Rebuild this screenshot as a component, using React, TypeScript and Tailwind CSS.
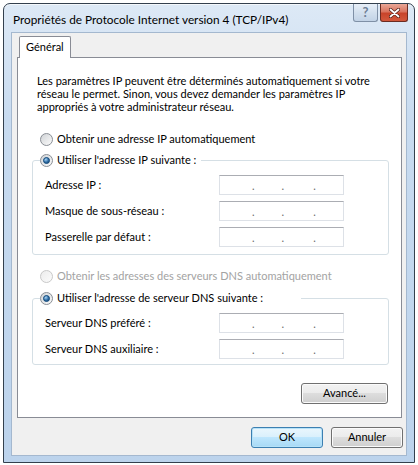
import React from 'react';

const font = { fontFamily: "'Segoe UI', Lato, 'Liberation Sans', sans-serif" };

function Radio({ checked = false, disabled = false }: { checked?: boolean; disabled?: boolean }) {
  return (
    <span
      className={
        'relative flex h-[13px] w-[13px] shrink-0 items-center justify-center rounded-full border ' +
        (disabled
          ? 'border-[#c9c9c9] bg-[#f3f3f3] bg-[linear-gradient(135deg,#ececec,#fbfbfb)]'
          : 'border-[#8a8f96] bg-[#e6e7e9] bg-[linear-gradient(135deg,#d0d3d6,#fbfbfb)]')
      }
    >
      {checked && (
        <span className="h-[7px] w-[7px] rounded-full border border-[#1b4f7e] bg-[#2f6ea6] bg-[radial-gradient(circle_at_35%_30%,#a8d4f5,#2f6ea6_55%,#123f69)]" />
      )}
    </span>
  );
}

function IpBox() {
  return (
    <div className="flex h-[20px] w-[125px] items-center border border-[#dde1e7] border-t-[#abadb3] bg-white text-[11px] leading-none text-[#6b6b6b]">
      <span className="ml-[32px]">.</span>
      <span className="ml-[27px]">.</span>
      <span className="ml-[29px]">.</span>
    </div>
  );
}

function FieldRow({ label }: { label: string }) {
  return (
    <div className="flex h-[20px] items-center">
      <span className="w-[186px] pl-[12px]">{label}</span>
      <IpBox />
    </div>
  );
}

function VistaButton({ label, primary = false, w }: { label: string; primary?: boolean; w: string }) {
  return (
    <button
      className={
        'h-[21px] rounded-[3px] border text-[11px] text-black ' +
        w +
        (primary
          ? ' border-[#3c7fb1] bg-[#d3ecfa] bg-[linear-gradient(to_bottom,#eaf6fd_0%,#d9f0fc_50%,#bee6fd_50%,#a7d9f5_100%)] shadow-[inset_0_0_0_1px_#b6e2f8]'
          : ' border-[#707070] bg-[#e3e3e3] bg-[linear-gradient(to_bottom,#f2f2f2_0%,#ebebeb_50%,#dddddd_50%,#cfcfcf_100%)] shadow-[inset_0_0_0_1px_#fbfbfb]')
      }
      style={font}
    >
      {label}
    </button>
  );
}

export default function App() {
  return (
    <div className="h-[465px] w-[418px] bg-white pl-[3px] pt-[3px]" style={font}>
      <div className="flex h-[460px] w-[412px] flex-col rounded-t-[7px] border border-[#33404e] bg-[#c4d9ef] bg-[linear-gradient(to_bottom,#dde9f6,#c8dbf0_25%,#bcd3ec)] shadow-[inset_0_1px_0_#f4f8fc]">
        {/* title bar */}
        <div className="flex h-[28px] shrink-0 items-start justify-between">
          <span className="mt-[7px] pl-[9px] text-[11.8px] text-black">
            Propriétés de Protocole Internet version 4 (TCP/IPv4)
          </span>
          <div className="mr-[6px] flex gap-[2px]">
            <div className="flex h-[18px] w-[25px] items-center justify-center rounded-b-[3px] border border-t-0 border-[#7f90a6] bg-[#d0deec] bg-[linear-gradient(to_bottom,#e8eff8,#d3e0ee_50%,#c2d3e6)] text-[13px] font-bold leading-none text-[#6d7f96]">
              ?
            </div>
            <div className="flex h-[18px] w-[28px] items-center justify-center rounded-b-[3px] border border-t-0 border-[#6b2c22] bg-[#cf553c] bg-[linear-gradient(to_bottom,#e9a797,#d9745f_45%,#c8442b_55%,#d2583c)]">
              <svg width="11" height="10" viewBox="0 0 11 10">
                <path d="M1.5 1.5 L9.5 8.5 M9.5 1.5 L1.5 8.5" stroke="#4a1a12" strokeWidth="3.2" strokeLinecap="round" />
                <path d="M1.5 1.5 L9.5 8.5 M9.5 1.5 L1.5 8.5" stroke="#ffffff" strokeWidth="1.8" strokeLinecap="round" />
              </svg>
            </div>
          </div>
        </div>

        {/* client area */}
        <div className="mx-[7px] flex h-[424px] flex-col border border-[#a4b8cf] bg-[#f0f0f0] text-[11px] text-black">
          <div className="ml-[7px] mt-[3px] flex">
            <div className="relative z-10 -mb-px flex h-[22px] items-center rounded-t-[2px] border border-b-0 border-[#898c95] bg-white px-[6px]">
              Général
            </div>
          </div>
          <div className="ml-[5px] flex h-[361px] w-[385px] flex-col border border-[#898c95] bg-white">
            <p className="ml-[19px] mt-[16px] leading-[13px]">
              Les paramètres IP peuvent être déterminés automatiquement si votre
              <br />
              réseau le permet. Sinon, vous devez demander les paramètres IP
              <br />
              appropriés à votre administrateur réseau.
            </p>

            <div className="ml-[22px] mt-[19px] flex h-[15px] items-center gap-[4px]">
              <Radio />
              <span>Obtenir une adresse IP automatiquement</span>
            </div>

            <fieldset className="ml-[14px] mr-[12px] mt-[6px] rounded-[3px] border border-[#d5dfe5] pb-[7px]">
              <legend className="ml-[7px] flex h-[15px] items-center gap-[4px] pr-[5px]">
                <Radio checked />
                <span>Utiliser l'adresse IP suivante :</span>
              </legend>
              <div className="mt-[7px] flex flex-col gap-[6px]">
                <FieldRow label="Adresse IP :" />
                <FieldRow label="Masque de sous-réseau :" />
                <FieldRow label="Passerelle par défaut :" />
              </div>
            </fieldset>

            <div className="ml-[22px] mt-[14px] flex h-[15px] items-center gap-[4px] text-[#a3a3a3]">
              <Radio disabled />
              <span>Obtenir les adresses des serveurs DNS automatiquement</span>
            </div>

            <fieldset className="ml-[14px] mr-[12px] mt-[7px] rounded-[3px] border border-[#d5dfe5] pb-[5px]">
              <legend className="ml-[7px] flex h-[15px] items-center gap-[4px] pr-[38px]">
                <Radio checked />
                <span>Utiliser l'adresse de serveur DNS suivante :</span>
              </legend>
              <div className="mt-[7px] flex flex-col gap-[6px]">
                <FieldRow label="Serveur DNS préféré :" />
                <FieldRow label="Serveur DNS auxiliaire :" />
              </div>
            </fieldset>

            <div className="mr-[13px] mt-[18px] flex justify-end">
              <VistaButton label="Avancé..." w="w-[87px]" />
            </div>
          </div>

          <div className="mr-[3px] mt-[9px] flex justify-end gap-[8px]">
            <VistaButton label="OK" primary w="w-[72px]" />
            <VistaButton label="Annuler" w="w-[72px]" />
          </div>
        </div>
      </div>
    </div>
  );
}
